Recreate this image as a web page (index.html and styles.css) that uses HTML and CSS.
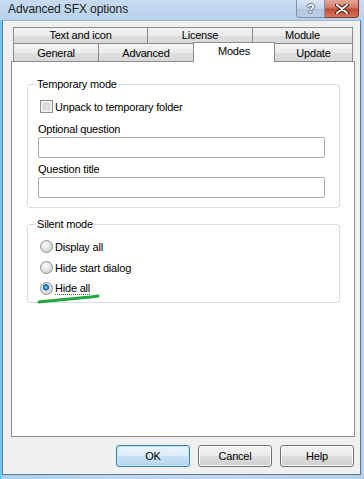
FILE: index.html
```html
<!DOCTYPE html>
<html lang="en">
<head>
    <meta charset="UTF-8">
    <meta name="viewport" content="width=device-width, initial-scale=1.0">
    <title>Advanced SFX options</title>
    <link rel="stylesheet" href="styles.css">
</head>
<body>

<div class="window">
    <div class="titlebar">
        <span class="title">Advanced SFX options</span>
        <span class="caption-btn help-btn">?</span>
        <span class="caption-btn close-btn">
            <svg width="14" height="10" viewBox="0 0 14 10">
                <path d="M2 1 L12 9 M12 1 L2 9" stroke="#4a1c14" stroke-width="4" stroke-linecap="round"/>
                <path d="M2 1 L12 9 M12 1 L2 9" stroke="#fff" stroke-width="2" stroke-linecap="round"/>
            </svg>
        </span>
    </div>

    <div class="client">
        <div class="tab-row row-top">
            <div class="tab w135">Text and icon</div>
            <div class="tab w106">License</div>
            <div class="tab w101">Module</div>
        </div>
        <div class="tab-row row-bottom">
            <div class="tab w86">General</div>
            <div class="tab w96">Advanced</div>
            <div class="tab w82 selected">Modes</div>
            <div class="tab w79">Update</div>
        </div>

        <div class="panel">
            <fieldset class="group group-temp">
                <legend>Temporary mode</legend>
                <div class="option">
                    <span class="check"></span>
                    <span>Unpack to temporary folder</span>
                </div>
                <div class="field-label first">Optional question</div>
                <div class="text-box"></div>
                <div class="field-label">Question title</div>
                <div class="text-box"></div>
            </fieldset>

            <fieldset class="group group-silent">
                <legend>Silent mode</legend>
                <div class="option radio-row">
                    <span class="radio"></span>
                    <span>Display all</span>
                </div>
                <div class="option radio-row">
                    <span class="radio"></span>
                    <span>Hide start dialog</span>
                </div>
                <div class="option radio-row">
                    <span class="radio checked"></span>
                    <span class="focused">Hide all</span>
                </div>
            </fieldset>
        </div>

        <div class="buttons">
            <div class="button default">OK</div>
            <div class="button">Cancel</div>
            <div class="button">Help</div>
        </div>
    </div>

    <!-- green marker stroke drawn over the dialog -->
    <svg class="marker" width="66" height="12" viewBox="0 0 66 12">
        <path d="M3 9 C 20 7, 40 6, 62 3" stroke="#1fa83c" stroke-width="3" fill="none" stroke-linecap="round"/>
    </svg>
</div>

</body>
</html>
```

FILE: styles.css
```css
body {
    margin: 0;
    width: 364px;
    height: 479px;
    overflow: hidden;
    font-family: 'Liberation Sans', Arial, sans-serif;
    font-size: 11px;
    letter-spacing: -0.2px;
    color: #000;
}
.window {
    position: relative;
    height: 479px;
    background: linear-gradient(to right, #5fc4ee 0, #a9d3f0 3px, #c2d8ee 40%, #b8d2ec 100%);
    display: flex;
    flex-direction: column;
}
.titlebar {
    height: 20px;
    display: flex;
    align-items: flex-start;
    padding-right: 5px;
    background: linear-gradient(#c6dbf1, #b9d2ec);
}
.title {
    font-size: 12px;
    letter-spacing: -0.1px;
    color: #1b1b1b;
    margin-left: 8px;
    margin-top: 2px;
    line-height: 14px;
}
.caption-btn {
    height: 18px;
    box-sizing: border-box;
    display: flex;
    align-items: center;
    justify-content: center;
}
.help-btn {
    margin-left: auto;
    width: 29px;
    border: 1px solid #7b93ae;
    border-top: none;
    border-radius: 0 0 0 4px;
    background: linear-gradient(#dbe6f3, #c3d3e6 50%, #b3c6dd 51%, #bccee3);
    color: #fff;
    font-size: 13px;
    font-weight: bold;
    text-shadow: -1px 0 0 #5f7189, 1px 0 0 #5f7189, 0 -1px 0 #5f7189, 0 1px 0 #5f7189;
}
.close-btn {
    width: 34px;
    border: 1px solid #7d3a31;
    border-top: none;
    border-left: none;
    border-radius: 0 0 4px 0;
    background: linear-gradient(#e6a89a, #d17a66 45%, #c24a34 55%, #d6765c);
}
.client {
    flex: 1;
    margin: 0 3px 4px 2px;
    border: 1px solid #5d7892;
    border-top-color: #9fb6cd;
    background: #f0f0f0;
    padding: 6px 5px 0 8px;
    display: flex;
    flex-direction: column;
}
.tab-row {
    display: flex;
    margin-left: 2px;
}
.tab {
    box-sizing: border-box;
    border: 1px solid #898c95;
    border-bottom: none;
    background: linear-gradient(#f3f3f3, #ebebeb 50%, #dedede 51%, #d8d8d8);
    text-align: center;
}
.tab + .tab {
    margin-left: -1px;
}
.row-top .tab {
    height: 16px;
    line-height: 15px;
}
.row-bottom .tab {
    height: 18px;
    line-height: 17px;
    padding-top: 1px;
}
.row-bottom .tab.selected {
    position: relative;
    z-index: 1;
    height: 20px;
    margin-top: -1px;
    margin-bottom: -1px;
    padding-top: 0;
    background: #fff;
}
.w135 { width: 135px; }
.w106 { width: 106px; }
.w101 { width: 101px; }
.w86 { width: 86px; }
.w96 { width: 96px; }
.w82 { width: 82px; }
.w79 { width: 79px; }
.panel {
    height: 376px;
    box-sizing: border-box;
    background: #fff;
    border: 1px solid #898c95;
    padding: 15px 14px 0 15px;
}
.group {
    margin: 0;
    border: 1px solid #d5dfe5;
    border-radius: 3px;
    padding: 0 14px 0 10px;
    min-inline-size: 0;
}
.group legend {
    padding: 0 1px;
    margin-left: -2px;
    line-height: 14px;
}
.group-temp {
    padding-bottom: 9px;
}
.group-silent {
    margin-top: 9px;
    padding-bottom: 3px;
}
.option {
    display: flex;
    align-items: center;
    height: 13px;
    margin-top: 9px;
}
.option .check,
.option .radio {
    margin-left: 2px;
    margin-right: 2px;
}
.radio-row {
    height: 21px;
    margin-top: 0;
}
.radio-row:first-of-type {
    margin-top: 5px;
}
.check {
    width: 13px;
    height: 13px;
    box-sizing: border-box;
    border: 1px solid #8e8f8f;
    background: linear-gradient(135deg, #cbcbcb, #f4f4f4);
    box-shadow: inset 0 0 0 2px #f0f0f0, inset 0 0 0 3px #d0d0d0;
}
.radio {
    width: 13px;
    height: 13px;
    box-sizing: border-box;
    border: 1px solid #8e8f8f;
    border-radius: 50%;
    background: radial-gradient(circle at 40% 35%, #fefefe 0, #e6e6e6 40%, #c4c4c4 100%);
}
.radio.checked {
    background:
        radial-gradient(circle at 45% 40%, #a6e1ff 0, #2c8fd0 1.6px, #145a8d 3px, rgba(0,0,0,0) 3.4px),
        radial-gradient(circle at 40% 35%, #fefefe 0, #e6e6e6 40%, #c4c4c4 100%);
}
.focused {
    border-bottom: 1px dotted #555;
    line-height: 12px;
}
.field-label {
    line-height: 14px;
    margin-top: 4px;
}
.field-label.first {
    margin-top: 9px;
}
.text-box {
    margin-top: 1px;
    height: 21px;
    box-sizing: border-box;
    border: 1px solid #abadb3;
    border-radius: 2px;
    background: #fff;
}
.buttons {
    display: flex;
    justify-content: flex-end;
    gap: 8px;
    margin-top: 8px;
    padding-right: 1px;
}
.button {
    width: 74px;
    height: 22px;
    box-sizing: border-box;
    border: 1px solid #707070;
    border-radius: 3px;
    background: linear-gradient(#f2f2f2, #ebebeb 50%, #dddddd 51%, #cfcfcf);
    box-shadow: inset 0 0 0 1px #fbfbfb;
    text-align: center;
    line-height: 20px;
}
.button.default {
    border-color: #3c7fb1;
    background: linear-gradient(#eaf4fb, #dcecf8 50%, #c6e0f3 51%, #b6d6ee);
    box-shadow: inset 0 0 0 1px #bfe7fd;
}
.marker {
    position: absolute;
    left: 36px;
    top: 293px;
}
```
